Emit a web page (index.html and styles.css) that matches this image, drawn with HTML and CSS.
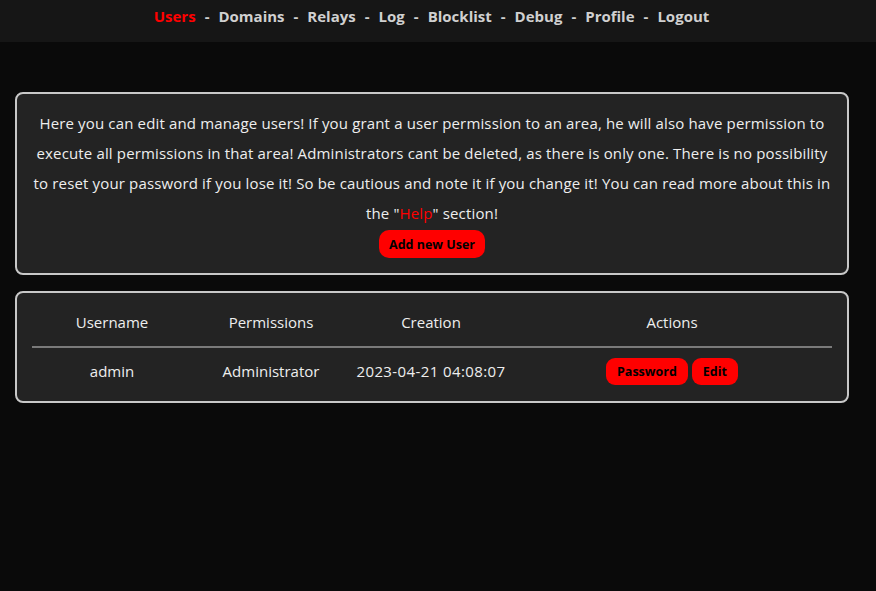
FILE: index.html
```html
<!DOCTYPE html>
<html>
<head>
<meta charset="utf-8">
<link rel="stylesheet" href="styles.css">
</head>
<body>
<nav class="nav">
  <a class="nav-link active">Users</a><span class="sep">-</span>
  <a class="nav-link">Domains</a><span class="sep">-</span>
  <a class="nav-link">Relays</a><span class="sep">-</span>
  <a class="nav-link">Log</a><span class="sep">-</span>
  <a class="nav-link">Blocklist</a><span class="sep">-</span>
  <a class="nav-link">Debug</a><span class="sep">-</span>
  <a class="nav-link">Profile</a><span class="sep">-</span>
  <a class="nav-link">Logout</a>
</nav>
<main class="main">
  <section class="card info">
    <p class="info-text">Here you can edit and manage users! If you grant a user permission to an area, he will also have permission to<br>execute all permissions in that area! Administrators cant be deleted, as there is only one. There is no possibility<br>to reset your password if you lose it! So be cautious and note it if you change it! You can read more about this in<br>the "<span class="help">Help</span>" section!</p>
    <button class="btn btn-add">Add new User</button>
  </section>
  <section class="card table-card">
    <table class="users">
      <thead>
        <tr><th>Username</th><th>Permissions</th><th>Creation</th><th class="actions-col">Actions</th></tr>
      </thead>
      <tbody>
        <tr>
          <td>admin</td>
          <td>Administrator</td>
          <td class="date">2023-04-21 04:08:07</td>
          <td class="actions-col"><button class="btn btn-small">Password</button><button class="btn btn-small">Edit</button></td>
        </tr>
      </tbody>
    </table>
  </section>
</main>
</body>
</html>
```
FILE: styles.css
```css
* { box-sizing: border-box; }
html, body { margin: 0; padding: 0; }
body {
  background: #0a0a0a;
  color: #eeeeee;
  font-family: "Open Sans", "Liberation Sans", sans-serif;
  min-height: 591px;
}
.nav {
  height: 42px;
  background: #161616;
  display: flex;
  justify-content: center;
  align-items: center;
  padding: 0 13px 10px 0;
  font-weight: 700;
  font-size: 15px;
  color: #d0d0d0;
}
.nav-link { color: #d0d0d0; }
.nav-link.active { color: #ff0000; }
.sep { margin: 0 9px; }
.main {
  padding: 50px 27px 0 15px;
  display: flex;
  flex-direction: column;
  gap: 16px;
}
.card {
  background: #232323;
  border: 2px solid #c8c8c8;
  border-radius: 8px;
}
.info {
  height: 183px;
  padding: 14px 4px 0;
  display: flex;
  flex-direction: column;
  align-items: center;
}
.info-text {
  margin: 0;
  text-align: center;
  font-size: 15px;
  line-height: 30px;
  letter-spacing: 0.15px;
  white-space: nowrap;
}
.help { color: #ff0000; }
.btn {
  background: #ff0000;
  color: #000;
  border: none;
  font-family: inherit;
  font-weight: 700;
  cursor: pointer;
}
.btn-add {
  margin-top: 2px;
  height: 28px;
  padding: 0 10px;
  border-radius: 10px;
  font-size: 12.5px;
}
.table-card {
  height: 112px;
  padding: 10px 15px 0;
}
.users {
  width: 800px;
  table-layout: fixed;
  border-collapse: collapse;
  font-size: 15px;
}
.users th {
  height: 44px;
  padding: 0 4px 5px;
  border-bottom: 2px solid #7a7a7a;
  font-weight: 400;
}
.users td {
  height: 45px;
  text-align: center;
  padding: 2px 4px 0;
  white-space: nowrap;
}
.users td.date { letter-spacing: 0.4px; }
.users th:nth-child(1) { width: 160px; }
.users th:nth-child(2) { width: 158px; }
.users th:nth-child(3) { width: 162px; }
.btn-small {
  height: 27px;
  padding: 0 11px;
  border-radius: 9px;
  font-size: 12.5px;
  margin: 0 2px;
}
```
